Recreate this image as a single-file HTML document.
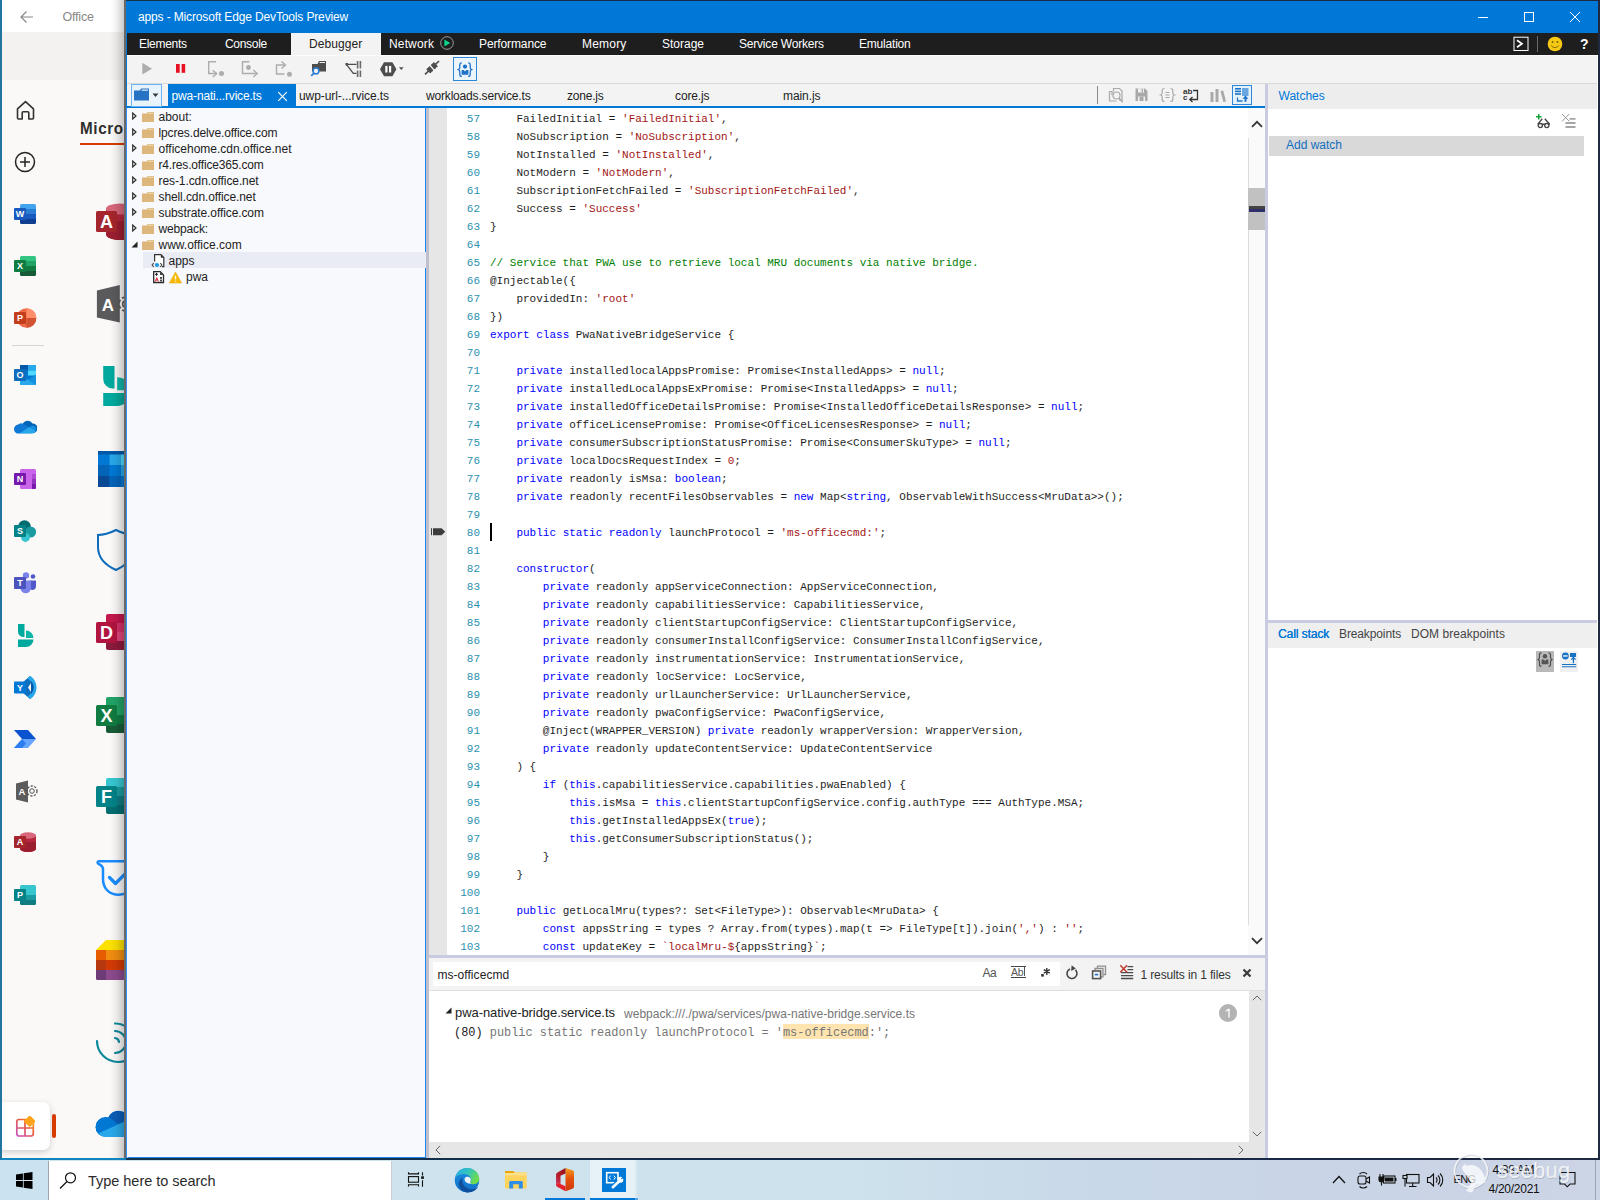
<!DOCTYPE html>
<html>
<head>
<meta charset="utf-8">
<title>apps - Microsoft Edge DevTools Preview</title>
<style>
*{box-sizing:border-box;margin:0;padding:0}
html,body{width:1600px;height:1200px;overflow:hidden;background:linear-gradient(90deg,#12354a,#13294a 50%,#1f2942 100%);font-family:"Liberation Sans",sans-serif;font-size:12px;color:#222}
.abs{position:absolute}
#office{position:absolute;left:0;top:0;width:126px;height:1160px;background:#faf9f8;border-left:2px solid #2474a0;border-bottom:2px solid #1184c0;overflow:hidden}
#office .top{position:absolute;left:0;top:0;width:130px;height:32px;background:#fff}
#office .band{position:absolute;left:0;top:32px;width:130px;height:48px;background:#f3f2f1}
#dt{position:absolute;left:126px;top:1px;width:1472px;height:1157px;background:#f3f3f3;border-left:1px solid #0078d7;overflow:hidden}
#dt .title{position:absolute;left:0;top:0;width:1472px;height:32px;background:#0078d7;color:#fff}
#dt .title .t{position:absolute;left:11px;top:9px;font-size:12px;letter-spacing:-.14px;white-space:nowrap}
#tabs{position:absolute;left:0;top:32px;width:1472px;height:22px;background:#1e1e1e;color:#fff}
#tabs span{position:absolute;top:4px;font-size:12px;letter-spacing:-.3px;white-space:nowrap}
#tabs .act{position:absolute;left:164px;top:0;width:90px;height:22px;background:#f3f3f3}
#toolbar{position:absolute;left:0;top:54px;width:1472px;height:29px;background:#f3f3f3;border-bottom:1px solid #dadada;border-top:1px solid #fcfcfc}
#ftabs{position:absolute;left:0;top:83px;width:1138px;height:24px;background:#f3f3f3;border-bottom:2px solid #0078d7}
#ftabs span{position:absolute;top:5px;font-size:12px;white-space:nowrap;color:#222}
#tree{position:absolute;left:0;top:107px;width:299px;height:1050px;background:#f8f9fc;border:1px solid #1e88f0;border-top:none;border-left:1px solid #f8f9fc}
#tree .row{position:absolute;left:0;height:16px;width:298px;white-space:nowrap;font-size:12px}
#tree .row span{position:absolute;top:2px}
#editor{position:absolute;left:302px;top:107px;width:836px;height:847px;background:#fff;overflow:hidden}
#gutter{position:absolute;left:0;top:0;width:18px;height:847px;background:#e6e6e6}
.ln,.cl{position:absolute;font-family:"Liberation Mono",monospace;font-size:11.5px;line-height:18px;height:18px;white-space:pre;transform:scaleX(.95652)}
.ln{left:17px;width:34px;text-align:right;color:#2b91af;transform-origin:100% 0}
.cl{left:61px;color:#1e1e1e;transform-origin:0 0}
.k{color:#0000ff}.s{color:#a31515}.c{color:#008000}
#vs{position:absolute;left:819px;top:0;width:17px;height:847px;background:#fafafa}
#search{position:absolute;left:303px;top:957px;width:835px;height:33px;background:#f3f3f3}
#results{position:absolute;left:303px;top:990px;width:835px;height:167px;background:#fff}
#right{position:absolute;left:1141px;top:83px;width:330px;height:1074px;background:#fff}
.split{background:#c9cbe0}
#taskbar{position:absolute;left:0;top:1160px;width:1600px;height:40px;background:linear-gradient(90deg,#cfe4ee 0,#cde2ec 850px,#c9d9e9 1060px,#c9d4e6 1340px,#ccd4e5 1600px);overflow:hidden}
</style>
</head>
<body>
<div id="office">
  <div class="top"></div><div class="band"></div>
  <svg class="abs" style="left:17px;top:9px" width="16" height="16" viewBox="0 0 16 16"><path d="M14 8H2.500M7.500 2.500L2 8l5.500 5.500" fill="none" stroke="#8a8886" stroke-width="1.200"/></svg>
<span class="abs" style="left:60.500px;top:10px;font-size:12.500px;letter-spacing:-.2px;color:#8a8886">Office</span>
<svg class="abs" style="left:13px;top:99px" width="22" height="23" viewBox="0 0 22 23"><path d="M2.500 9.800L10.500 2.700l8 7.100v9.200a1 1 0 0 1-1 1h-3.700v-6.200a1 1 0 0 0-1-1h-4.600a1 1 0 0 0-1 1v6.200H3.500a1 1 0 0 1-1-1z" fill="none" stroke="#323130" stroke-width="1.600" stroke-linejoin="round"/></svg>
<span class="abs" style="left:77.800px;top:119.900px;font-size:15.6px;font-weight:bold;color:#2f2e2d;white-space:nowrap;letter-spacing:.66px;transform:scaleX(.976);transform-origin:0 0">Microsoft</span>
<div class="abs" style="left:78px;top:143px;width:60px;height:2px;background:#d83b01"></div>
<svg class="abs" style="left:12px;top:151px" width="22" height="22" viewBox="0 0 22 22"><circle cx="11" cy="11" r="9.500" fill="none" stroke="#252423" stroke-width="1.500"/><path d="M11 6v10M6 11h10" stroke="#252423" stroke-width="1.500"/></svg>
<svg class="abs" style="left:12px;top:204px" width="23" height="22" viewBox="0 0 23 22"><clipPath id="c12204"><rect x="6" y="0" width="16" height="20" rx="1.5"/></clipPath><g clip-path="url(#c12204)"><rect x="6" y="0" width="16" height="5" fill="#41a5ee"/><rect x="6" y="5" width="16" height="5" fill="#2b7cd3"/><rect x="6" y="10" width="16" height="5" fill="#185abd"/><rect x="6" y="15" width="16" height="5" fill="#103f91"/></g><rect x="0" y="4" width="12" height="12" rx="1" fill="#185abd"/><text x="6" y="13.300" text-anchor="middle" font-family="Liberation Sans" font-weight="bold" font-size="9" fill="#fff">W</text></svg>
<svg class="abs" style="left:12px;top:256px" width="23" height="22" viewBox="0 0 23 22"><clipPath id="c12256"><rect x="6" y="0" width="16" height="20" rx="1.5"/></clipPath><g clip-path="url(#c12256)"><rect x="6" y="0" width="16" height="5" fill="#33c481"/><rect x="6" y="5" width="16" height="5" fill="#21a366"/><rect x="6" y="10" width="16" height="5" fill="#107c41"/><rect x="6" y="15" width="16" height="5" fill="#185c37"/></g><rect x="0" y="4" width="12" height="12" rx="1" fill="#107c41"/><text x="6" y="13.300" text-anchor="middle" font-family="Liberation Sans" font-weight="bold" font-size="9" fill="#fff">X</text></svg>
<svg class="abs" style="left:12px;top:308px" width="23" height="22" viewBox="0 0 23 22"><circle cx="12.500" cy="10" r="9.800" fill="#ed6c47"/><path d="M12.500 .2a9.800 9.800 0 0 1 9.800 9.800h-9.800z" fill="#ff8f6b"/><path d="M22.300 10a9.800 9.800 0 0 1-9.800 9.800V10z" fill="#d35230"/><rect x="0" y="4" width="12" height="12" rx="1" fill="#c43e1c"/><text x="6" y="13.300" text-anchor="middle" font-family="Liberation Sans" font-weight="bold" font-size="9" fill="#fff">P</text></svg>
<div class="abs" style="left:10px;top:345px;width:32px;height:1px;background:#d6d4d2"></div>
<svg class="abs" style="left:12px;top:365px" width="23" height="22" viewBox="0 0 23 22"><rect x="6" y="0" width="16" height="20" rx="1.500" fill="#0078d4"/><rect x="6" y="0" width="8" height="5.500" fill="#0358a7"/><rect x="14" y="0" width="8" height="5.500" fill="#28a8ea"/><rect x="14" y="5.500" width="8" height="5" fill="#50d9ff"/><path d="M6 20l16-10.500V18.500a1.500 1.500 0 0 1-1.500 1.500z" fill="#1490df"/><path d="M6 10l16 10H7.500A1.500 1.500 0 0 1 6 18.500z" fill="#28a8ea"/><rect x="0" y="4" width="12" height="12" rx="1" fill="#0f6cbd"/><text x="6" y="13.300" text-anchor="middle" font-family="Liberation Sans" font-weight="bold" font-size="9" fill="#fff">O</text></svg>
<svg class="abs" style="left:12px;top:419px" width="23" height="16" viewBox="0 0 23 15"><path d="M8.500 5.200a5.500 5.500 0 0 1 10-1.200 4.500 4.500 0 0 1 .5 9.500H5a4.200 4.200 0 0 1-.8-8.300z" fill="#0364b8"/><path d="M3.800 5.300a4.700 4.700 0 0 1 5.700-.9l5.500 3.300-9.500 6.300H5A4.200 4.200 0 0 1 3.800 5.300z" fill="#0f78d4"/><path d="M15 7.700l3.800-1.600a4 4 0 0 1 .5 7.700H5.500z" fill="#1490df"/><path d="M5.500 14l9.500-6.300 6.300 3.800A4 4 0 0 1 18 14z" fill="#28a8ea"/></svg>
<svg class="abs" style="left:12px;top:469px" width="23" height="22" viewBox="0 0 23 22"><clipPath id="c12469"><rect x="6" y="0" width="16" height="20" rx="1.5"/></clipPath><g clip-path="url(#c12469)"><rect x="6" y="0" width="16" height="5" fill="#ca64ea"/><rect x="6" y="5" width="16" height="5" fill="#ca64ea"/><rect x="6" y="10" width="16" height="5" fill="#ca64ea"/><rect x="6" y="15" width="16" height="5" fill="#ca64ea"/><rect x="18" y="5" width="4" height="5" fill="#ae4bd5"/><rect x="18" y="10" width="4" height="5" fill="#9332bf"/><rect x="18" y="15" width="4" height="5" fill="#7719aa"/></g><rect x="0" y="4" width="12" height="12" rx="1" fill="#7719aa"/><text x="6" y="13.300" text-anchor="middle" font-family="Liberation Sans" font-weight="bold" font-size="9" fill="#fff">N</text></svg>
<svg class="abs" style="left:12px;top:520px" width="23" height="23" viewBox="0 0 23 23"><circle cx="10.500" cy="6.500" r="6.300" fill="#036c70"/><circle cx="16.500" cy="12" r="5.600" fill="#1a9ba1"/><circle cx="11.500" cy="17.500" r="4.400" fill="#37c6d0"/><rect x="0" y="5" width="12" height="12" rx="1" fill="#038387"/><text x="6" y="14.300" text-anchor="middle" font-family="Liberation Sans" font-weight="bold" font-size="9" fill="#fff">S</text></svg>
<svg class="abs" style="left:12px;top:572px" width="23" height="23" viewBox="0 0 23 23"><circle cx="19" cy="4.500" r="2.300" fill="#5059c9"/><path d="M15.500 8.500h6.500v6a3.500 3.500 0 0 1-6.500 1.800z" fill="#5059c9"/><circle cx="12" cy="3.500" r="3.200" fill="#7b83eb"/><path d="M6.500 8.500h10.500v7.500a5.200 5.200 0 0 1-10.500 0z" fill="#7b83eb"/><rect x="0" y="5" width="12" height="12" rx="1" fill="#4b53bc"/><text x="6" y="14.300" text-anchor="middle" font-family="Liberation Sans" font-weight="bold" font-size="9" fill="#fff">T</text></svg>
<svg class="abs" style="left:16px;top:624px" width="17" height="23" viewBox="0 0 17 23"><path d="M0 0h6.5v13H5.5A5.5 5.5 0 0 1 0 7.5z" fill="#00a99d"/><path d="M8 6.500a7.500 7.500 0 0 1 7.500 7.500H8z" fill="#0fb5a8"/><path d="M0 15.500h15.500a7.500 7.500 0 0 1-7.500 7.500H0z" fill="#00a99d"/></svg>
<svg class="abs" style="left:12px;top:676px" width="23" height="23" viewBox="0 0 23 23"><path d="M8 7l8-7 3 4-5 7.500 5 7.500-3 4-8-7z" fill="#106ebe"/><path d="M13 2.500l3.500-2.500a14 14 0 0 1 0 23l-3.500-2.500a10 10 0 0 0 0-18z" fill="#28a8ea"/><path d="M17 5a9 9 0 0 1 0 13z" fill="#0358a7"/><rect x="0" y="5.500" width="12" height="12" rx="1" fill="#0078d4"/><text x="6" y="14.800" text-anchor="middle" font-family="Liberation Sans" font-weight="bold" font-size="9" fill="#fff">Y</text></svg>
<svg class="abs" style="left:12px;top:729px" width="23" height="20" viewBox="0 0 23 20"><path d="M0 1h14l8 9h-14z" fill="#0b53ce"/><path d="M8 10h14l-8 9H0z" fill="#66a6ff"/><path d="M0 19l8-9 4 4.500-4 4.500z" fill="#2d7df0"/></svg>
<svg class="abs" style="left:13px;top:780px" width="24" height="23" viewBox="0 0 24 23"><circle cx="17" cy="11" r="5" fill="none" stroke="#555" stroke-width="1.300" stroke-dasharray="2.200 1.400"/><circle cx="17" cy="11" r="2.300" fill="none" stroke="#555" stroke-width="1"/><path d="M1 3.500L13 .5v22L1 19.500z" fill="#5c5c5c"/><text x="7" y="15" text-anchor="middle" font-family="Liberation Sans" font-weight="bold" font-size="9.500" fill="#fff">A</text></svg>
<svg class="abs" style="left:12px;top:832px" width="23" height="22" viewBox="0 0 23 22"><path d="M6 3.500v13c0 2 3.600 3.500 8 3.500s8-1.500 8-3.500v-13z" fill="#b5273b"/><path d="M6 10v6.500c0 2 3.600 3.500 8 3.500s8-1.500 8-3.500V10z" fill="#9b1d30"/><ellipse cx="14" cy="3.500" rx="8" ry="3.200" fill="#d8677b"/><rect x="0" y="4" width="12" height="12" rx="1" fill="#a4262c"/><text x="6" y="13.300" text-anchor="middle" font-family="Liberation Sans" font-weight="bold" font-size="9" fill="#fff">A</text></svg>
<svg class="abs" style="left:12px;top:885px" width="23" height="22" viewBox="0 0 23 22"><clipPath id="c12885"><rect x="6" y="0" width="16" height="20" rx="1.5"/></clipPath><g clip-path="url(#c12885)"><rect x="6" y="0" width="16" height="5" fill="#37c6d0"/><rect x="6" y="5" width="16" height="5" fill="#37c6d0"/><rect x="6" y="10" width="16" height="5" fill="#1a9ba1"/><rect x="6" y="15" width="16" height="5" fill="#0f7c82"/></g><rect x="0" y="4" width="12" height="12" rx="1" fill="#038387"/><text x="6" y="13.300" text-anchor="middle" font-family="Liberation Sans" font-weight="bold" font-size="9" fill="#fff">P</text></svg>
<svg class="abs" style="left:94px;top:203px" width="40" height="40" viewBox="0 0 40 40"><path d="M10 6v25c0 3.500 6 6 14 6s14-2.500 14-6V6z" fill="#b5273b"/><path d="M10 18v13c0 3.500 6 6 14 6s14-2.500 14-6V18z" fill="#9b1d30"/><ellipse cx="24" cy="6" rx="14" ry="5.500" fill="#d8677b"/><rect x="0" y="8" width="21" height="21" rx="1.500" fill="#a4262c"/><text x="10.500" y="25" text-anchor="middle" font-family="Liberation Sans" font-weight="bold" font-size="18" fill="#fff">A</text></svg>
<svg class="abs" style="left:94px;top:284px" width="40" height="40" viewBox="0 0 40 40"><circle cx="30" cy="20" r="7" fill="none" stroke="#555" stroke-width="1.800" stroke-dasharray="3.500 2.200"/><circle cx="30" cy="20" r="3.300" fill="none" stroke="#555" stroke-width="1.500"/><path d="M.9 6.500L23.800 1v37.500L.9 33.500z" fill="#5a5a5c"/><text x="12" y="26.500" text-anchor="middle" font-family="Liberation Sans" font-weight="bold" font-size="17" fill="#fff">A</text></svg>
<svg class="abs" style="left:101px;top:366px" width="30" height="40" viewBox="0 0 17 23"><path d="M0 0h6.5v13H5.5A5.5 5.5 0 0 1 0 7.5z" fill="#00a99d"/><path d="M8 6.500a7.500 7.500 0 0 1 7.500 7.500H8z" fill="#0fb5a8"/><path d="M0 15.500h15.500a7.500 7.500 0 0 1-7.500 7.500H0z" fill="#00a99d"/></svg>
<svg class="abs" style="left:96px;top:451px" width="40" height="36" viewBox="0 0 40 36"><rect width="40" height="36" rx="2" fill="#0364b8"/><rect x="0.0" y="3" width="11.500" height="11" fill="#0078d4"/><rect x="11.5" y="3" width="11.500" height="11" fill="#28a8ea"/><rect x="23.0" y="3" width="11.500" height="11" fill="#50d9ff"/><rect x="0.0" y="14" width="11.500" height="11" fill="#0364b8"/><rect x="11.5" y="14" width="11.500" height="11" fill="#0078d4"/><rect x="23.0" y="14" width="11.500" height="11" fill="#28a8ea"/><rect x="0.0" y="25" width="11.500" height="11" fill="#0a4a94"/><rect x="11.5" y="25" width="11.500" height="11" fill="#0364b8"/><rect x="23.0" y="25" width="11.500" height="11" fill="#0078d4"/><rect width="40" height="3.500" fill="#0358a7"/></svg>
<svg class="abs" style="left:94px;top:529px" width="44" height="44" viewBox="0 0 44 44"><path d="M2 6c7 0 12-2 18-5 6 3 11 5 18 5v12c0 11-7 18-18 23C9 36 2 29 2 18z" fill="none" stroke="#0f6cbd" stroke-width="2"/></svg>
<svg class="abs" style="left:94px;top:614px" width="40" height="40" viewBox="0 0 40 40"><clipPath id="d94614"><rect x="10" y="0" width="28" height="36" rx="2"/></clipPath><g clip-path="url(#d94614)"><rect x="10" y="0" width="28" height="9" fill="#c2174b"/><rect x="10" y="9" width="28" height="9" fill="#d4316a"/><rect x="10" y="18" width="28" height="9" fill="#e0467c"/><rect x="10" y="27" width="28" height="9" fill="#8c1a3c"/></g><rect x="0" y="8" width="21" height="21" rx="1.500" fill="#b0143f"/><text x="10.500" y="25" text-anchor="middle" font-family="Liberation Sans" font-weight="bold" font-size="18" fill="#fff">D</text></svg>
<svg class="abs" style="left:94px;top:697px" width="40" height="40" viewBox="0 0 40 40"><clipPath id="d94697"><rect x="10" y="0" width="28" height="36" rx="2"/></clipPath><g clip-path="url(#d94697)"><rect x="10" y="0" width="28" height="9" fill="#21a366"/><rect x="10" y="9" width="28" height="9" fill="#21a366"/><rect x="10" y="18" width="28" height="9" fill="#107c41"/><rect x="10" y="27" width="28" height="9" fill="#185c37"/></g><rect x="0" y="8" width="21" height="21" rx="1.500" fill="#107c41"/><text x="10.500" y="25" text-anchor="middle" font-family="Liberation Sans" font-weight="bold" font-size="18" fill="#fff">X</text></svg>
<svg class="abs" style="left:94px;top:778px" width="40" height="40" viewBox="0 0 40 40"><clipPath id="d94778"><rect x="10" y="0" width="28" height="36" rx="2"/></clipPath><g clip-path="url(#d94778)"><rect x="10" y="0" width="28" height="9" fill="#37c6d0"/><rect x="10" y="9" width="28" height="9" fill="#1a9ba1"/><rect x="10" y="18" width="28" height="9" fill="#0f7c82"/><rect x="10" y="27" width="28" height="9" fill="#036c70"/></g><rect x="0" y="8" width="21" height="21" rx="1.500" fill="#038387"/><text x="10.500" y="25" text-anchor="middle" font-family="Liberation Sans" font-weight="bold" font-size="18" fill="#fff">F</text></svg>
<svg class="abs" style="left:93px;top:858px" width="44" height="40" viewBox="0 0 44 40"><path d="M4 3.200h29c6 0 6 4 6 8v10c0 10-7 15.500-15.500 15.500S8 31 8 21V11c0-3-2-4-4.500-5.200C2 5 2.500 3.200 4 3.200z" fill="none" stroke="#1a8cff" stroke-width="2.500" stroke-linejoin="round"/><path d="M14.500 19.500l6 6 14-14" fill="none" stroke="#1a8cff" stroke-width="3.200" stroke-linecap="round" stroke-linejoin="round"/></svg>
<svg class="abs" style="left:94px;top:939px" width="40" height="42" viewBox="0 0 40 42"><path d="M10 1h30v10H0z" fill="#fbe000"/><rect x="0" y="11" width="10" height="10" fill="#e65c00"/><rect x="10" y="11" width="30" height="10" fill="#f08c10"/><rect x="0" y="21" width="10" height="10" fill="#b5380f"/><rect x="10" y="21" width="30" height="10" fill="#d13a05"/><path d="M0 31h10v10H1.500A1.500 1.500 0 0 1 0 39.500z" fill="#6d3b78"/><rect x="10" y="31" width="30" height="10" fill="#8a4a8c"/></svg>
<svg class="abs" style="left:92px;top:1018px" width="44" height="46" viewBox="0 0 44 46" fill="none" stroke="#0c8a9c" stroke-width="2.200" stroke-linecap="round"><path d="M3 23a21 21 0 0 0 42 0"/><path d="M21 5.500a17.500 17.500 0 0 1 12 4"/><path d="M21 13a11 11 0 0 1 0 22"/><path d="M21 20a4.500 4.500 0 0 1 4 4"/></svg>
<svg class="abs" style="left:91px;top:1108px" width="40" height="32" viewBox="0 0 40 32"><clipPath id="bigcloud"><circle cx="12.500" cy="19" r="9.900"/><circle cx="25.500" cy="13.500" r="10.800"/><rect x="12.500" y="17" width="30" height="11.900"/></clipPath><g clip-path="url(#bigcloud)"><rect width="40" height="32" fill="#0078d4"/><circle cx="25.500" cy="13.500" r="10.800" fill="#0a5db8"/><path d="M0 14l15-5.500 12 9-27 13z" fill="#0078d4"/><path d="M0 28L40 9.500v23H0z" fill="#28a8ea"/></g></svg>
<div class="abs" style="left:-4px;top:1102px;width:52px;height:48px;background:#fff;border-radius:7px;box-shadow:0 2px 6px rgba(0,0,0,.18)"></div>
<svg class="abs" style="left:13px;top:1116px" width="22" height="22" viewBox="0 0 22 22"><defs><linearGradient id="ga" x1="0" y1="1" x2="1" y2="0"><stop offset="0" stop-color="#c850c0"/><stop offset=".6" stop-color="#e8593a"/><stop offset="1" stop-color="#ffb900"/></linearGradient></defs><rect x="1.800" y="3.500" width="16.500" height="16.500" rx="2.200" fill="none" stroke="url(#ga)" stroke-width="1.700"/><path d="M10 3.500V20M1.800 12h16.500" stroke="url(#ga)" stroke-width="1.700"/><rect x="10.500" y="1" width="8.500" height="8.500" rx="1.500" transform="rotate(45 14.750 5.250)" fill="#ffa41a"/></svg>
<div class="abs" style="left:50px;top:1114px;width:4px;height:24px;border-radius:2px;background:#d83b01"></div>
<div class="abs" style="left:108px;top:0;width:15px;height:1160px;background:linear-gradient(90deg,rgba(0,0,0,0),rgba(0,0,0,.05) 40%,rgba(0,0,0,.22))"></div>
<div class="abs" style="left:122px;top:0;width:2px;height:1160px;background:#686868"></div>
</div>
<div id="dt">
  <div class="title"><span class="t">apps - Microsoft Edge DevTools Preview</span><svg class="abs" style="left:1343px;top:0" width="120" height="32" viewBox="0 0 120 32" fill="none" stroke="#fff" stroke-width="1">
<path d="M8 16.5h10"/><rect x="54.5" y="11.5" width="9" height="9"/><path d="M100 11l10 10M110 11l-10 10"/></svg></div>
  <div id="tabs"><div class="act"></div>
    <span style="left:12px;letter-spacing:-0.3px">Elements</span>
    <span style="left:98px;letter-spacing:-0.3px">Console</span>
    <span style="left:182px;color:#222;letter-spacing:0.08px">Debugger</span>
    <span style="left:262px;letter-spacing:0.15px">Network</span>
    <span style="left:352px;letter-spacing:-0.12px">Performance</span>
    <span style="left:455px;letter-spacing:0.2px">Memory</span>
    <span style="left:535px;letter-spacing:0px">Storage</span>
    <span style="left:612px;letter-spacing:-0.2px">Service Workers</span>
    <span style="left:732px;letter-spacing:-0.2px">Emulation</span>
    <svg class="abs" style="left:313px;top:3px" width="14" height="14" viewBox="0 0 14 14"><circle cx="7" cy="7" r="6.3" fill="none" stroke="#bdbdbd" stroke-width=".8"/><path d="M4.4 3.5v7L10.2 7z" fill="#0dd58b"/></svg>
<svg class="abs" style="left:1386px;top:3px" width="16" height="16" viewBox="0 0 16 16"><rect x="1" y="1.2" width="14" height="13.3" fill="#1e1e1e" stroke="#fff" stroke-width="1"/><path d="M4 4.2l5 3.5-5 3.5" fill="none" stroke="#fff" stroke-width="1.7"/></svg>
<div class="abs" style="left:1410px;top:3px;width:1px;height:16px;background:#6a6a6a"></div>
<svg class="abs" style="left:1420px;top:3px" width="16" height="16" viewBox="0 0 16 16"><circle cx="8" cy="8" r="7.3" fill="#f6c915"/><circle cx="5.6" cy="6" r="1" fill="#7a6500"/><circle cx="10.4" cy="6" r="1" fill="#7a6500"/><path d="M4.2 9.3c1.6 3 6 3 7.600 0" fill="none" stroke="#8a7200" stroke-width="1"/></svg>
<span style="left:1453px;top:3px;font-weight:bold;font-size:14px;color:#fff">?</span>
  </div>
  <div id="toolbar"><svg class="abs" style="left:13px;top:4px" width="160" height="20" viewBox="0 0 160 20">
<path d="M2.300 2.800v11.800L12 8.700z" fill="#adadad"/>
<rect x="36" y="4" width="3.700" height="8.800" fill="#e81123"/><rect x="41.600" y="4" width="3.600" height="8.800" fill="#e81123"/>
<g fill="none" stroke="#adadad" stroke-width="1.400"><path d="M76 1.700h-7.300v11.800h7.800"/><path d="M72.700 10.200l4 3.400-4 3.400"/></g><circle cx="81.500" cy="13.600" r="2.500" fill="#adadad"/>
<g fill="none" stroke="#adadad" stroke-width="1.400"><path d="M109.500 1.700h-7v11.800h14.200"/><path d="M113.300 10l4 3.500-4 3.500"/></g><circle cx="108.500" cy="7.500" r="2.400" fill="#adadad"/>
<g fill="none" stroke="#adadad" stroke-width="1.400"><path d="M144.500 14h-8V5h8.500"/><path d="M141.500 1.500l4 3.500-4 3.500"/></g><circle cx="149.500" cy="14.300" r="2.500" fill="#adadad"/>
</svg>
<svg class="abs" style="left:183px;top:4px" width="18" height="18" viewBox="0 0 18 18"><path d="M2 4h5.500l1.500-3h7v10.500H2z" fill="#4d4d4d"/><path d="M9.800 2h5.200v1h-5.700z" fill="#f0f0f0"/><circle cx="6" cy="11" r="2.900" fill="#f3f3f3" stroke="#2b7cd3" stroke-width="1.500"/><path d="M3.900 13.100l-2.700 2.700" stroke="#2b7cd3" stroke-width="1.700"/></svg>
<svg class="abs" style="left:217px;top:4px" width="20" height="18" viewBox="0 0 20 18" fill="none"><path d="M2.500 4.300h10M2.800 4.800l6.500 8.500h3.200" stroke="#4d4d4d" stroke-width="1.300"/><rect x="1.500" y="3" width="2.500" height="2.500" fill="#4d4d4d"/><path d="M13.600 1v7.500M16.400 1v7.500M13.600 10.500v6.500M16.400 10.500v6.500" stroke="#6a6a6a" stroke-width="1.600"/></svg>
<svg class="abs" style="left:252px;top:5px" width="26" height="18" viewBox="0 0 26 18"><path d="M5 1.200h8.400l4 7-4 7H5L1 8.200z" fill="#4d4d4d"/><rect x="6.300" y="4.900" width="2.200" height="6.600" fill="#fff"/><rect x="10" y="4.900" width="2.200" height="6.600" fill="#fff"/><path d="M20 6.300h4.600l-2.300 2.700z" fill="#4d4d4d"/></svg>
<svg class="abs" style="left:296px;top:3px" width="18" height="18" viewBox="0 0 18 18"><path d="M2 15.300L16 2" stroke="#4d4d4d" stroke-width="1.700"/><path d="M5.300 12.200L12.700 5.200" stroke="#4d4d4d" stroke-width="5.600"/><path d="M4 9.800l3.800 4M6 8l3.700 4M10.500 3.700l3.800 4M8.600 5.500l3.800 4" stroke="#4d4d4d" stroke-width="1.300"/><path d="M5.800 4.800l6.400 7.800" stroke="#f3f3f3" stroke-width="1.400"/></svg>
<div class="abs" style="left:326px;top:1px;width:24px;height:24px;background:#ecf4fc;border:1px solid #2b88d8"></div>
<svg class="abs" style="left:330px;top:5.700000000000003px" width="16" height="16" viewBox="0 0 16 16"><g fill="none" stroke="#1e74c8" stroke-width="1.300"><path d="M4.800 .8c-1.700 0-2 .7-2 1.900v2.600c0 1.200-.4 1.900-1.400 2.300 1 .4 1.400 1.100 1.400 2.300v2.600c0 1.200.3 1.900 2 1.900"/><path d="M11.200 .8c1.700 0 2 .7 2 1.900v2.600c0 1.200.4 1.900 1.400 2.300-1 .4-1.400 1.100-1.400 2.300v2.600c0 1.200-.3 1.900-2 1.900"/></g><circle cx="8" cy="4.600" r="2.100" fill="#1e74c8"/><path d="M4.600 8h2.200l1.200 1.500 1.200-1.500h2.200v4.700h-6.800z" fill="#1e74c8"/></svg></div>
  <div id="ftabs">
    <div class="abs" style="left:4px;top:0;width:31px;height:23px;background:#e9f3fc;border:1px solid #6ab4f5"></div>
<svg class="abs" style="left:6px;top:3px" width="28" height="16" viewBox="0 0 28 16"><path d="M1 3.500h5.500l2-2h7.500v12H1z" fill="#2672c4"/><path d="M9.300 2.500h5.700v1.200H8.200z" fill="#e8f1fb"/><path d="M19.500 6.500h6l-3 3.500z" fill="#3b3b3b"/></svg>
<div class="abs" style="left:41px;top:0;width:128px;height:23px;background:#0078d7"></div>
<span style="left:44.6px;top:5px;color:#fff;font-size:12px;letter-spacing:-0.178px">pwa-nati...rvice.ts</span>
<svg class="abs" style="left:150px;top:7px" width="11" height="11" viewBox="0 0 11 11"><path d="M1.200 1.200l8.600 8.600M9.800 1.200l-8.600 8.600" stroke="#fff" stroke-width="1.200" fill="none"/></svg>
<span style="left:172.0px;top:5px;color:#222;font-size:12px;letter-spacing:-0.072px">uwp-url-...rvice.ts</span>
<span style="left:299.0px;top:5px;color:#222;font-size:12px;letter-spacing:-0.177px">workloads.service.ts</span>
<span style="left:440.0px;top:5px;color:#222;font-size:12px;letter-spacing:-0.219px">zone.js</span>
<span style="left:548.0px;top:5px;color:#222;font-size:12px;letter-spacing:-0.120px">core.js</span>
<span style="left:656.0px;top:5px;color:#222;font-size:12px;letter-spacing:-0.074px">main.js</span>
<div class="abs" style="left:970px;top:2px;width:1px;height:18px;background:#8a8a8a"></div>
<svg class="abs" style="left:980px;top:2px" width="148" height="20" viewBox="0 0 148 20">
<g fill="none" stroke="#a9a9a9" stroke-width="1.200"><path d="M6.500 5.500V2.500h6l2.500 2.500v9h-3"/><path d="M5 9V5.500H2.500v9.500h7"/><circle cx="9.500" cy="9.500" r="3.500"/><path d="M12 12.300l3.800 3.800" stroke-width="1.500"/></g>
<path d="M28.500 2.500h9.500l2.500 2.500v10h-12z" fill="#a9a9a9"/><rect x="31" y="2.500" width="6" height="4" fill="#f3f3f3"/><rect x="34.500" y="3" width="1.500" height="3" fill="#a9a9a9"/><rect x="31" y="10.500" width="7" height="4.500" fill="#f3f3f3"/><rect x="32.500" y="10.500" width="4" height="4.500" fill="#a9a9a9"/>
<g fill="none" stroke="#a9a9a9" stroke-width="1.200"><path d="M57.500 2.500c-2 0-2.300.8-2.300 2v2.300c0 1.200-.5 1.900-1.600 2.200 1.100.3 1.600 1 1.600 2.200v2.300c0 1.200.3 2 2.300 2"/><path d="M63.500 2.500c2 0 2.300.8 2.300 2v2.300c0 1.200.5 1.900 1.600 2.200-1.100.3-1.600 1-1.600 2.200v2.300c0 1.200-.3 2-2.300 2"/><path d="M58.500 6.500h4M58.500 9h4M58.500 11.500h4"/></g>
<g fill="none" stroke="#333" stroke-width="1.300"><path d="M86 4.500h4.500v9h-7.500"/><path d="M85.500 11l-2.700 2.500 2.700 2.500"/></g>
<text x="76" y="7.500" font-family="Liberation Sans" font-size="8" font-weight="bold" fill="#333">ab</text><text x="76" y="14" font-family="Liberation Sans" font-size="8" font-weight="bold" fill="#333">c</text>
<g fill="#a9a9a9"><rect x="103.500" y="6" width="3" height="10"/><rect x="108.500" y="3" width="3" height="13"/><path d="M113.500 5l2.700-.6 2.800 11-2.700.6z"/></g>
</svg>
<div class="abs" style="left:1105px;top:1px;width:20px;height:20px;background:#e5f1fb;border:1px solid #2b88d8"></div>
<svg class="abs" style="left:1107px;top:3px" width="16" height="16" viewBox="0 0 16 16"><g fill="#1e74c8"><rect x="1" y="1" width="6" height="1.600"/><rect x="1" y="3.600" width="6" height="1.600"/><rect x="1" y="6.200" width="6" height="1.600"/><rect x="8" y="1" width="6.500" height="8" fill="#6aa7e0"/><path d="M11.500 8.500l3 3.200h-2v3h-2v-3h-2z"/></g><path d="M3.500 10.500v3.500h5" fill="none" stroke="#1e74c8" stroke-width="1.300"/></svg>
  </div>
  <div id="tree"><svg class="abs" style="left:4px;top:4px" width="5" height="8" viewBox="0 0 5 8"><path d="M.7 1v6L4 4z" fill="none" stroke="#2a2a2a" stroke-width="1.150"/></svg><svg class="abs" style="left:14px;top:3px" width="12" height="11" viewBox="0 0 12 11"><path d="M0 2.600h4.600l1.200-1.600H12V11H0z" fill="#dcb67a"/><path d="M6.300 1.700h5.200v.9H5.700z" fill="#f6ead2"/></svg><div class="row" style="top:0px"><span style="left:30.5px;letter-spacing:0px">about:</span></div>
<svg class="abs" style="left:4px;top:20px" width="5" height="8" viewBox="0 0 5 8"><path d="M.7 1v6L4 4z" fill="none" stroke="#2a2a2a" stroke-width="1.150"/></svg><svg class="abs" style="left:14px;top:19px" width="12" height="11" viewBox="0 0 12 11"><path d="M0 2.600h4.600l1.200-1.600H12V11H0z" fill="#dcb67a"/><path d="M6.300 1.700h5.200v.9H5.700z" fill="#f6ead2"/></svg><div class="row" style="top:16px"><span style="left:30.5px;letter-spacing:-0.13px">lpcres.delve.office.com</span></div>
<svg class="abs" style="left:4px;top:36px" width="5" height="8" viewBox="0 0 5 8"><path d="M.7 1v6L4 4z" fill="none" stroke="#2a2a2a" stroke-width="1.150"/></svg><svg class="abs" style="left:14px;top:35px" width="12" height="11" viewBox="0 0 12 11"><path d="M0 2.600h4.600l1.200-1.600H12V11H0z" fill="#dcb67a"/><path d="M6.300 1.700h5.200v.9H5.700z" fill="#f6ead2"/></svg><div class="row" style="top:32px"><span style="left:30.5px;letter-spacing:0px">officehome.cdn.office.net</span></div>
<svg class="abs" style="left:4px;top:52px" width="5" height="8" viewBox="0 0 5 8"><path d="M.7 1v6L4 4z" fill="none" stroke="#2a2a2a" stroke-width="1.150"/></svg><svg class="abs" style="left:14px;top:51px" width="12" height="11" viewBox="0 0 12 11"><path d="M0 2.600h4.600l1.200-1.600H12V11H0z" fill="#dcb67a"/><path d="M6.300 1.700h5.200v.9H5.700z" fill="#f6ead2"/></svg><div class="row" style="top:48px"><span style="left:30.5px;letter-spacing:-0.17px">r4.res.office365.com</span></div>
<svg class="abs" style="left:4px;top:68px" width="5" height="8" viewBox="0 0 5 8"><path d="M.7 1v6L4 4z" fill="none" stroke="#2a2a2a" stroke-width="1.150"/></svg><svg class="abs" style="left:14px;top:67px" width="12" height="11" viewBox="0 0 12 11"><path d="M0 2.600h4.600l1.200-1.600H12V11H0z" fill="#dcb67a"/><path d="M6.300 1.700h5.200v.9H5.700z" fill="#f6ead2"/></svg><div class="row" style="top:64px"><span style="left:30.5px;letter-spacing:-0.09px">res-1.cdn.office.net</span></div>
<svg class="abs" style="left:4px;top:84px" width="5" height="8" viewBox="0 0 5 8"><path d="M.7 1v6L4 4z" fill="none" stroke="#2a2a2a" stroke-width="1.150"/></svg><svg class="abs" style="left:14px;top:83px" width="12" height="11" viewBox="0 0 12 11"><path d="M0 2.600h4.600l1.200-1.600H12V11H0z" fill="#dcb67a"/><path d="M6.300 1.700h5.200v.9H5.700z" fill="#f6ead2"/></svg><div class="row" style="top:80px"><span style="left:30.5px;letter-spacing:-0.1px">shell.cdn.office.net</span></div>
<svg class="abs" style="left:4px;top:100px" width="5" height="8" viewBox="0 0 5 8"><path d="M.7 1v6L4 4z" fill="none" stroke="#2a2a2a" stroke-width="1.150"/></svg><svg class="abs" style="left:14px;top:99px" width="12" height="11" viewBox="0 0 12 11"><path d="M0 2.600h4.600l1.200-1.600H12V11H0z" fill="#dcb67a"/><path d="M6.300 1.700h5.200v.9H5.700z" fill="#f6ead2"/></svg><div class="row" style="top:96px"><span style="left:30.5px;letter-spacing:-0.09px">substrate.office.com</span></div>
<svg class="abs" style="left:4px;top:116px" width="5" height="8" viewBox="0 0 5 8"><path d="M.7 1v6L4 4z" fill="none" stroke="#2a2a2a" stroke-width="1.150"/></svg><svg class="abs" style="left:14px;top:115px" width="12" height="11" viewBox="0 0 12 11"><path d="M0 2.600h4.600l1.200-1.600H12V11H0z" fill="#dcb67a"/><path d="M6.300 1.700h5.200v.9H5.700z" fill="#f6ead2"/></svg><div class="row" style="top:112px"><span style="left:30.5px;letter-spacing:-0.15px">webpack:</span></div>
<svg class="abs" style="left:3px;top:133px" width="7" height="7" viewBox="0 0 7 7"><path d="M6.5.5v6h-6z" fill="#222"/></svg><svg class="abs" style="left:14px;top:131px" width="12" height="11" viewBox="0 0 12 11"><path d="M0 2.600h4.600l1.200-1.600H12V11H0z" fill="#dcb67a"/><path d="M6.300 1.700h5.200v.9H5.700z" fill="#f6ead2"/></svg><div class="row" style="top:128px"><span style="left:30.5px;letter-spacing:0px">www.office.com</span></div>
<div class="abs" style="left:15px;top:144px;width:283px;height:16px;background:#e9ebf5"></div>
<svg class="abs" style="left:23px;top:146px" width="14" height="14" viewBox="0 0 14 14"><path d="M3.600 7.500V.700h6.400l2.800 2.800v9.200h-1.800" fill="#fff" stroke="#333" stroke-width="1.200"/><path d="M9.800 .400v3.300h3.300z" fill="#333"/><circle cx="6" cy="11" r="2.100" fill="#1c9be0"/><path d="M2.700 9.200L1.100 11l1.600 1.800M9.300 9.200l1.600 1.800-1.600 1.800" fill="none" stroke="#444" stroke-width="1.100"/></svg>
<div class="row" style="top:144px"><span style="left:40.500px">apps</span></div>
<svg class="abs" style="left:25px;top:163px" width="12" height="13" viewBox="0 0 12 13"><path d="M.7.7h6.600l3.200 3.200v7.600H.7z" fill="#fff" stroke="#2a2a2a" stroke-width="1.300"/><path d="M7 .2v3.900h3.900z" fill="#444"/><path d="M2 3.300h3M3.500 1.800v3" stroke="#222" stroke-width="1"/><path d="M2.300 10.300l1.500-3.600 1.500 3.600M2.800 9h2" stroke="#e0202c" stroke-width="1" fill="none"/><rect x="7" y="6" width="2" height="1.800" fill="#444"/><rect x="7" y="8.600" width="2" height="1.800" fill="#444"/></svg>
<svg class="abs" style="left:40.500px;top:163px" width="13" height="13" viewBox="0 0 13 12"><path d="M6.5.6L12.6 11.5H.4z" fill="#f7b900" stroke="#f0ac00" stroke-width=".6"/><path d="M6.5 4v4" stroke="#fff8e0" stroke-width="1.4"/><circle cx="6.5" cy="9.7" r=".8" fill="#fff8e0"/></svg>
<div class="row" style="top:160px"><span style="left:58px">pwa</span></div></div>
  <div id="editor">
    <div id="gutter"></div>
    <svg class="abs" style="left:2px;top:420px" width="15" height="8" viewBox="0 0 15 8"><rect x="0" y=".2" width="1" height="7" fill="#3c3c3c"/><path d="M2 .2h8.600l3.600 3.500-3.600 3.500H2z" fill="#3c3c3c"/></svg>
    <div class="abs" style="left:61px;top:415px;width:2px;height:18px;background:#000"></div>
    <div class="ln" style="top:2px">57</div><div class="cl" style="top:2px">    FailedInitial = <span class="s">'FailedInitial'</span>,</div>
<div class="ln" style="top:20px">58</div><div class="cl" style="top:20px">    NoSubscription = <span class="s">'NoSubscription'</span>,</div>
<div class="ln" style="top:38px">59</div><div class="cl" style="top:38px">    NotInstalled = <span class="s">'NotInstalled'</span>,</div>
<div class="ln" style="top:56px">60</div><div class="cl" style="top:56px">    NotModern = <span class="s">'NotModern'</span>,</div>
<div class="ln" style="top:74px">61</div><div class="cl" style="top:74px">    SubscriptionFetchFailed = <span class="s">'SubscriptionFetchFailed'</span>,</div>
<div class="ln" style="top:92px">62</div><div class="cl" style="top:92px">    Success = <span class="s">'Success'</span></div>
<div class="ln" style="top:110px">63</div><div class="cl" style="top:110px">}</div>
<div class="ln" style="top:128px">64</div><div class="cl" style="top:128px"></div>
<div class="ln" style="top:146px">65</div><div class="cl" style="top:146px"><span class="c">// Service that PWA use to retrieve local MRU documents via native bridge.</span></div>
<div class="ln" style="top:164px">66</div><div class="cl" style="top:164px">@Injectable({</div>
<div class="ln" style="top:182px">67</div><div class="cl" style="top:182px">    providedIn: <span class="s">'root'</span></div>
<div class="ln" style="top:200px">68</div><div class="cl" style="top:200px">})</div>
<div class="ln" style="top:218px">69</div><div class="cl" style="top:218px"><span class="k">export</span> <span class="k">class</span> PwaNativeBridgeService {</div>
<div class="ln" style="top:236px">70</div><div class="cl" style="top:236px"></div>
<div class="ln" style="top:254px">71</div><div class="cl" style="top:254px">    <span class="k">private</span> installedlocalAppsPromise: Promise&lt;InstalledApps&gt; = <span class="k">null</span>;</div>
<div class="ln" style="top:272px">72</div><div class="cl" style="top:272px">    <span class="k">private</span> installedLocalAppsExPromise: Promise&lt;InstalledApps&gt; = <span class="k">null</span>;</div>
<div class="ln" style="top:290px">73</div><div class="cl" style="top:290px">    <span class="k">private</span> installedOfficeDetailsPromise: Promise&lt;InstalledOfficeDetailsResponse&gt; = <span class="k">null</span>;</div>
<div class="ln" style="top:308px">74</div><div class="cl" style="top:308px">    <span class="k">private</span> officeLicensePromise: Promise&lt;OfficeLicensesResponse&gt; = <span class="k">null</span>;</div>
<div class="ln" style="top:326px">75</div><div class="cl" style="top:326px">    <span class="k">private</span> consumerSubscriptionStatusPromise: Promise&lt;ConsumerSkuType&gt; = <span class="k">null</span>;</div>
<div class="ln" style="top:344px">76</div><div class="cl" style="top:344px">    <span class="k">private</span> localDocsRequestIndex = <span class="s">0</span>;</div>
<div class="ln" style="top:362px">77</div><div class="cl" style="top:362px">    <span class="k">private</span> readonly isMsa: <span class="k">boolean</span>;</div>
<div class="ln" style="top:380px">78</div><div class="cl" style="top:380px">    <span class="k">private</span> readonly recentFilesObservables = <span class="k">new</span> Map&lt;<span class="k">string</span>, ObservableWithSuccess&lt;MruData&gt;&gt;();</div>
<div class="ln" style="top:398px">79</div><div class="cl" style="top:398px"></div>
<div class="ln" style="top:416px">80</div><div class="cl" style="top:416px">    <span class="k">public</span> <span class="k">static</span> <span class="k">readonly</span> launchProtocol = <span class="s">'ms-officecmd:'</span>;</div>
<div class="ln" style="top:434px">81</div><div class="cl" style="top:434px"></div>
<div class="ln" style="top:452px">82</div><div class="cl" style="top:452px">    <span class="k">constructor</span>(</div>
<div class="ln" style="top:470px">83</div><div class="cl" style="top:470px">        <span class="k">private</span> readonly appServiceConnection: AppServiceConnection,</div>
<div class="ln" style="top:488px">84</div><div class="cl" style="top:488px">        <span class="k">private</span> readonly capabilitiesService: CapabilitiesService,</div>
<div class="ln" style="top:506px">85</div><div class="cl" style="top:506px">        <span class="k">private</span> readonly clientStartupConfigService: ClientStartupConfigService,</div>
<div class="ln" style="top:524px">86</div><div class="cl" style="top:524px">        <span class="k">private</span> readonly consumerInstallConfigService: ConsumerInstallConfigService,</div>
<div class="ln" style="top:542px">87</div><div class="cl" style="top:542px">        <span class="k">private</span> readonly instrumentationService: InstrumentationService,</div>
<div class="ln" style="top:560px">88</div><div class="cl" style="top:560px">        <span class="k">private</span> readonly locService: LocService,</div>
<div class="ln" style="top:578px">89</div><div class="cl" style="top:578px">        <span class="k">private</span> readonly urlLauncherService: UrlLauncherService,</div>
<div class="ln" style="top:596px">90</div><div class="cl" style="top:596px">        <span class="k">private</span> readonly pwaConfigService: PwaConfigService,</div>
<div class="ln" style="top:614px">91</div><div class="cl" style="top:614px">        @Inject(WRAPPER_VERSION) <span class="k">private</span> readonly wrapperVersion: WrapperVersion,</div>
<div class="ln" style="top:632px">92</div><div class="cl" style="top:632px">        <span class="k">private</span> readonly updateContentService: UpdateContentService</div>
<div class="ln" style="top:650px">93</div><div class="cl" style="top:650px">    ) {</div>
<div class="ln" style="top:668px">94</div><div class="cl" style="top:668px">        <span class="k">if</span> (<span class="k">this</span>.capabilitiesService.capabilities.pwaEnabled) {</div>
<div class="ln" style="top:686px">95</div><div class="cl" style="top:686px">            <span class="k">this</span>.isMsa = <span class="k">this</span>.clientStartupConfigService.config.authType === AuthType.MSA;</div>
<div class="ln" style="top:704px">96</div><div class="cl" style="top:704px">            <span class="k">this</span>.getInstalledAppsEx(<span class="k">true</span>);</div>
<div class="ln" style="top:722px">97</div><div class="cl" style="top:722px">            <span class="k">this</span>.getConsumerSubscriptionStatus();</div>
<div class="ln" style="top:740px">98</div><div class="cl" style="top:740px">        }</div>
<div class="ln" style="top:758px">99</div><div class="cl" style="top:758px">    }</div>
<div class="ln" style="top:776px">100</div><div class="cl" style="top:776px"></div>
<div class="ln" style="top:794px">101</div><div class="cl" style="top:794px">    <span class="k">public</span> getLocalMru(types?: Set&lt;FileType&gt;): Observable&lt;MruData&gt; {</div>
<div class="ln" style="top:812px">102</div><div class="cl" style="top:812px">        <span class="k">const</span> appsString = types ? Array.from(types).map(t =&gt; FileType[t]).join(<span class="s">','</span>) : <span class="s">''</span>;</div>
<div class="ln" style="top:830px">103</div><div class="cl" style="top:830px">        <span class="k">const</span> updateKey = <span class="s">`localMru-$</span>{appsString}<span class="s">`</span>;</div>
    <div id="vs"><svg class="abs" style="left:3px;top:12px" width="12" height="8" viewBox="0 0 12 8"><path d="M1 6.800l5-5 5 5" fill="none" stroke="#333" stroke-width="1.700"/></svg>
<div class="abs" style="left:0;top:30px;width:1px;height:787px;background:#dcdcdc"></div>
<div class="abs" style="left:0;top:80px;width:17px;height:42px;background:#c1c1c1"></div>
<div class="abs" style="left:1px;top:98px;width:16px;height:3px;background:#444"></div>
<div class="abs" style="left:1px;top:101px;width:16px;height:3px;background:#2f2f6b"></div>
<svg class="abs" style="left:3px;top:829px" width="12" height="8" viewBox="0 0 12 8"><path d="M1 1.200l5 5 5-5" fill="none" stroke="#333" stroke-width="1.700"/></svg></div>
  </div>
  <div class="abs" style="left:299px;top:107px;width:3px;height:1050px;background:#c0c0cc"></div>
  <div class="abs split" style="left:302px;top:954px;width:836px;height:3px"></div>
  <div id="search"><div class="abs" style="left:3px;top:4px;width:627px;height:24px;background:#fff"></div>
<span class="abs" style="left:7.399999999999977px;top:10px;font-size:12px;letter-spacing:.06px;color:#222;white-space:nowrap">ms-officecmd</span>
<span class="abs" style="left:552.5px;top:8px;font-size:12px;color:#555;white-space:nowrap;letter-spacing:-.4px">Aa</span>
<span class="abs" style="left:581px;top:8.200000000000045px;font-size:10.500px;color:#555;white-space:nowrap;letter-spacing:-.3px;border-top:1.300px solid #444;border-bottom:1.200px solid #444;line-height:10px;height:12px;width:14.500px">Ab</span>
<div class="abs" style="left:593.7px;top:9px;width:1.200px;height:9px;background:#555"></div>
<svg class="abs" style="left:610px;top:9px" width="12" height="12" viewBox="0 0 12 12"><rect x="1.200" y="7" width="2.600" height="2.600" fill="#333"/><path d="M6.800 1v7M3.800 2.700l6 3.500M9.800 2.700l-6 3.500" stroke="#333" stroke-width="1.400"/></svg>
<svg class="abs" style="left:635px;top:7px" width="14" height="15" viewBox="0 0 14 15"><path d="M9.500 4.200A5 5 0 1 1 4 4.500" fill="none" stroke="#444" stroke-width="1.600" transform="rotate(14 7 8.500)"/><path d="M6.600 0.300l4.200 3.200-4.600 2.400z" fill="#444"/></svg>
<svg class="abs" style="left:661px;top:6px" width="16" height="16" viewBox="0 0 16 16" fill="none"><path d="M6.500 4.200V2.200h8v8.300h-2" stroke="#8f8f8f" stroke-width="1.300"/><path d="M4 6.700V4.500h8v8.300h-2" stroke="#8f8f8f" stroke-width="1.300"/><rect x="1.600" y="7" width="8" height="7.600" fill="#f3f3f3" stroke="#555" stroke-width="1.600"/><rect x="3.800" y="9.800" width="3.400" height="1.600" fill="#1e6fd0"/></svg>
<svg class="abs" style="left:689px;top:6px" width="15" height="16" viewBox="0 0 15 16"><path d="M8.500 2.700h5.700M8.500 5.600h5.700M2 8.700h12.200M2 11.600h12.200M2 14.500h12.200" stroke="#4a4a4a" stroke-width="1.300"/><path d="M1.300 1.300l6.700 7M8 1.300l-6.700 7" stroke="#c0392b" stroke-width="1.500"/></svg>
<span class="abs" style="left:710.5px;top:10px;font-size:12px;letter-spacing:-.13px;color:#333;white-space:nowrap">1 results in 1 files</span>
<svg class="abs" style="left:812px;top:10px" width="10" height="10" viewBox="0 0 10 10"><path d="M1.500 1.500l7 7M8.500 1.500l-7 7" stroke="#3a3a3a" stroke-width="2.200"/></svg>
<div class="abs" style="left:0;top:32px;width:836px;height:1px;background:#dedede"></div></div>
  <div class="abs" style="left:302px;top:990px;width:1px;height:151px;background:#fff"></div><div class="abs" style="left:302px;top:1141px;width:1px;height:16px;background:#e6e6e6"></div>
  <div id="results"><svg class="abs" style="left:15px;top:16px" width="7" height="7" viewBox="0 0 7 7"><path d="M6.500.5v6h-6z" fill="#222"/></svg>
<span class="abs" style="left:25px;top:14px;font-size:13px;letter-spacing:-.07px;color:#222;white-space:nowrap">pwa-native-bridge.service.ts</span>
<span class="abs" style="left:194px;top:16px;font-size:12px;letter-spacing:.03px;color:#767676;white-space:nowrap">webpack:///./pwa/services/pwa-native-bridge.service.ts</span>
<div class="abs" style="left:353px;top:33px;width:86px;height:15px;background:#ffe4b0"></div>
<span class="abs" style="left:24px;top:34.5px;font-family:'Liberation Mono',monospace;font-size:12.500px;line-height:15px;color:#767676;white-space:pre;transform:scaleX(.9533);transform-origin:0 0"><span style="color:#222">(80)</span> public static readonly launchProtocol = 'ms-officecmd:';</span>
<svg class="abs" style="left:789px;top:13px" width="18" height="18" viewBox="0 0 18 18"><circle cx="9" cy="9" r="9" fill="#b3b3b3"/><path d="M6.900 7.300l2.500-1.900h.6v8.200" fill="none" stroke="#fff" stroke-width="1.300"/></svg>
<div class="abs" style="left:819px;top:0;width:16px;height:151px;background:#e6e6e6"></div>
<div class="abs" style="left:0;top:151px;width:836px;height:16px;background:#e6e6e6"></div>
<svg class="abs" style="left:822px;top:4px" width="10" height="6" viewBox="0 0 10 6"><path d="M.8 5.200l4.200-4.200 4.200 4.200" fill="none" stroke="#666" stroke-width="1"/></svg>
<svg class="abs" style="left:822px;top:140px" width="10" height="6" viewBox="0 0 10 6"><path d="M.8.800l4.200 4.200 4.200-4.200" fill="none" stroke="#666" stroke-width="1"/></svg>
<svg class="abs" style="left:5px;top:154px" width="6" height="10" viewBox="0 0 6 10"><path d="M5.200.8l-4.200 4.200 4.200 4.200" fill="none" stroke="#666" stroke-width="1"/></svg>
<svg class="abs" style="left:808px;top:154px" width="6" height="10" viewBox="0 0 6 10"><path d="M.8.800l4.200 4.200-4.200 4.200" fill="none" stroke="#666" stroke-width="1"/></svg></div>
  <div class="abs split" style="left:1138px;top:83px;width:3px;height:1074px"></div>
  <div id="right"><div class="abs" style="left:0;top:0;width:330px;height:24.600px;background:#ededed"></div>
<span class="abs" style="left:10.5px;top:5px;font-size:12px;color:#0078d7;white-space:nowrap">Watches</span>
<svg class="abs" style="left:266px;top:29px" width="18" height="16" viewBox="0 0 18 16"><path d="M2 3.800h5.500M4.750 1v5.500" stroke="#16a33a" stroke-width="1.500"/><g fill="#fff" stroke="#444" stroke-width="1.300"><path d="M4 11L8.300 5.700M15.500 11l-4.700-5.300" fill="none"/><path d="M3.800 11.300h11.900" stroke-width="1.600"/><circle cx="6.300" cy="12.600" r="2.100"/><circle cx="12.800" cy="12.600" r="2.100"/></g></svg>
<svg class="abs" style="left:293px;top:29px" width="18" height="16" viewBox="0 0 18 16"><path d="M1 1l7.300 7.300M8.300 1L1 8.300" stroke="#9a9a9a" stroke-width="1"/><path d="M8.500 5.800h6M4.500 10h10M4.500 14h10" stroke="#a6a6a6" stroke-width="1.800"/></svg>
<div class="abs" style="left:1px;top:52px;width:315px;height:19.600px;background:#d9d9d9"></div>
<span class="abs" style="left:18px;top:54px;font-size:12px;color:#106ebe;white-space:nowrap">Add watch</span>
<div class="abs split" style="left:0;top:536px;width:330px;height:3px"></div>
<div class="abs" style="left:0;top:539px;width:330px;height:24.800px;background:#efefef"></div>
<span class="abs" style="left:10px;top:543px;font-size:12px;color:#0078d7;white-space:nowrap;letter-spacing:-.1px;text-shadow:.3px 0 0 #0078d7">Call stack</span>
<span class="abs" style="left:71px;top:543px;font-size:12px;color:#444;white-space:nowrap;letter-spacing:-.12px">Breakpoints</span>
<span class="abs" style="left:143px;top:543px;font-size:12px;color:#444;white-space:nowrap;letter-spacing:.04px">DOM breakpoints</span>
<div class="abs" style="left:268px;top:567px;width:18px;height:21px;background:#b9b9b9"></div>
<svg class="abs" style="left:269px;top:568px" width="16" height="16" viewBox="0 0 16 16"><g fill="none" stroke="#4f4f4f" stroke-width="1.200"><path d="M4.500 .8c-1.700 0-2 .7-2 1.900v2.600c0 1.200-.4 1.900-1.400 2.300 1 .4 1.400 1.100 1.400 2.300v2.600c0 1.200.3 1.900 2 1.900"/><path d="M11.500 .8c1.700 0 2 .7 2 1.900v2.600c0 1.200.4 1.900 1.400 2.300-1 .4-1.400 1.100-1.400 2.300v2.600c0 1.200-.3 1.900-2 1.900"/></g><circle cx="8" cy="4.300" r="2.200" fill="#555"/><path d="M4.600 7.500h2.200l1.200 1.500 1.200-1.500h2.200v4.700h-6.800z" fill="#555"/></svg>
<div class="abs" style="left:292px;top:567px;width:18px;height:21px;background:#f0f0f0"></div>
<svg class="abs" style="left:293px;top:568px" width="17" height="16" viewBox="0 0 17 16"><circle cx="4.400" cy="4" r="3.400" fill="#1672c4"/><rect x="2.200" y="3.300" width="4.400" height="1.300" fill="#fff"/><rect x="9" y="1" width="6" height="4" fill="#1672c4"/><path d="M12.400 5v6.200M10.300 7.600l2.100-2.200 2.100 2.200" stroke="#1672c4" stroke-width="1.300" fill="none"/><path d="M1 12.500h14.200M1 14.700h14.200" stroke="#1672c4" stroke-width="1.100"/></svg></div>
  <div class="abs" style="left:1470px;top:54px;width:1px;height:1103px;background:#fff"></div>
</div>
<div class="abs" style="left:126px;top:108px;width:1px;height:1050px;background:#3392f5"></div>
<div id="taskbar"><div class="abs" style="left:0;top:0;width:48px;height:40px;background:#cbe3f0"></div>
<svg class="abs" style="left:16px;top:12px" width="17" height="17" viewBox="0 0 17 17"><path d="M0 2.400L6.900 1.400v6.700H0zM7.700 1.300L16.500 0v8.100H7.700zM0 8.900h6.900v6.700L0 14.600zM7.700 8.900h8.800V17l-8.800-1.300z" fill="#000"/></svg>
<div class="abs" style="left:48px;top:1px;width:344px;height:39px;background:#fff;border-left:1px solid #9fa6ad;border-right:1px solid #c9ced4"></div>
<svg class="abs" style="left:59px;top:11px" width="18" height="18" viewBox="0 0 18 18"><circle cx="11.500" cy="6.800" r="5" fill="none" stroke="#111" stroke-width="1.200"/><path d="M8 10.500L1 17.500" stroke="#111" stroke-width="1.300"/></svg>
<span class="abs" style="left:88px;top:13px;font-size:14.500px;color:#2b2b2b;white-space:nowrap;letter-spacing:-.03px">Type here to search</span>
<svg class="abs" style="left:407px;top:11px" width="18" height="17" viewBox="0 0 18 17" fill="none" stroke="#111" stroke-width="1.100"><rect x="1.500" y="5.600" width="10" height="5.600"/><path d="M1.500 1.200v1.700h10V1.200M1.500 15.500v-1.700h10v1.700"/><path d="M15.500 1.200v3.300M15.500 9.200v6.500"/><rect x="14.200" y="5.300" width="2.700" height="2.600" fill="#111" stroke="none"/></svg>
<svg class="abs" style="left:454px;top:7px" width="26" height="26" viewBox="0 0 26 26"><defs><linearGradient id="eg1" x1="0" y1="0" x2="0" y2="1"><stop offset="0" stop-color="#1b8fe0"/><stop offset="1" stop-color="#1170c8"/></linearGradient><linearGradient id="eg2" x1="0" y1="0" x2="1" y2=".5"><stop offset="0" stop-color="#2aa9ec"/><stop offset=".5" stop-color="#30c3c0"/><stop offset="1" stop-color="#6fdc4c"/></linearGradient></defs><circle cx="13" cy="13.200" r="12.200" fill="url(#eg1)"/><path d="M1.200 10.500C2.500 4.800 7.300 1 13 1c7 0 12.200 5 12.200 10.800 0 3.300-2.300 5.400-5.300 5.400-2.300 0-3.600-.8-3.600-1.800 0-.6.900-1 .9-2.700 0-2.800-3-5.700-7-5.700-4.300 0-8 2.300-9 3.500z" fill="url(#eg2)"/><path d="M8.500 11.500c-1.200 5 2.800 10.500 9 10.700 2.400.1 4.800-.8 6.600-2.400-1.900 3.400-5.700 5.800-10.200 5.600C8.300 25.200 4.600 21 4.800 16.500c.1-2.800 1.800-5 4.400-6-.4.300-.6.600-.7 1z" fill="#0f4f9e"/><path d="M10.800 11c.7-.9 1.700-1.300 2.700-1.300 2 0 3.400 1.400 3.400 3 0 1.300-.7 1.800-.7 2.600 0 .5.400 1 1.100 1.300-2.800.2-5.400-.8-6.300-2.600-.5-1-.6-2.100-.2-3z" fill="#eef6fb"/></svg>
<svg class="abs" style="left:504px;top:10px" width="24" height="20" viewBox="0 0 24 20"><path d="M1 1.200h8.500l1 1.800H1z" fill="#e8a400"/><rect x="1" y="2.200" width="21.700" height="16.300" rx=".8" fill="#ffd45c"/><rect x="1" y="2.900" width="21.700" height="2.500" fill="#ffe08a"/><path d="M1 1.200h8.500l1 1.800H1z" fill="#e8a400"/><path d="M5.200 12.200a1.200 1.200 0 0 1 1.200-1.200h11.200a1.200 1.200 0 0 1 1.200 1.200v6.300h-4v-4.300H9.200v4.300h-4z" fill="#2f8fe6"/></svg>
<svg class="abs" style="left:555px;top:7px" width="20" height="25" viewBox="0 0 20 25"><defs><linearGradient id="og1" x1="0" y1="0" x2="0" y2="1"><stop offset="0" stop-color="#f59e22"/><stop offset=".45" stop-color="#e4500a"/><stop offset="1" stop-color="#cf380a"/></linearGradient><linearGradient id="og2" x1="1" y1="0" x2="0" y2="1"><stop offset="0" stop-color="#8f1216"/><stop offset=".6" stop-color="#b81c2a"/><stop offset="1" stop-color="#c93a6a"/></linearGradient></defs><path d="M10.500 1L17.500 3.200a2 2 0 0 1 1.500 2v14.600a2 2 0 0 1-1.500 2L10.500 24.200z" fill="url(#og1)"/><path d="M10.500 1L2.500 5.500A2.500 2.500 0 0 0 1 7.800v9.500l4.500-2.300V8.800L10.500 6.500z" fill="url(#og2)"/><path d="M1 17.300l4.500-2.300v2l5 2.200v5l-8-4.200A2.500 2.500 0 0 1 1 17.300z" fill="#e3212d"/></svg>
<div class="abs" style="left:545px;top:38px;width:40px;height:2px;background:#0078d7"></div>
<div class="abs" style="left:590px;top:0;width:45px;height:40px;background:rgba(255,255,255,.5)"></div>
<div class="abs" style="left:635px;top:0;width:2px;height:40px;background:rgba(255,255,255,.25)"></div>
<div class="abs" style="left:590px;top:38px;width:45px;height:2px;background:#0078d7"></div><div class="abs" style="left:635px;top:38px;width:2.500px;height:2px;background:#5aa5e6"></div>
<svg class="abs" style="left:602px;top:8px" width="24" height="24" viewBox="0 0 24 24"><rect width="24" height="24" fill="#0078d7"/><rect x="4.700" y="4.700" width="11.300" height="10" fill="none" stroke="#fff" stroke-width="1.600"/><path d="M8.700 7.600l-1.500 2 1.500 2M11.800 7.600l1.500 2-1.500 2" fill="none" stroke="#fff" stroke-width="1"/><path d="M17.200 13.300L10.800 19.200" stroke="#0078d7" stroke-width="5"/><path d="M17.500 13L10.800 19.200" stroke="#fff" stroke-width="2.600" stroke-linecap="round"/><circle cx="18.300" cy="11.700" r="3" fill="#fff"/><path d="M18.600 11.400l2.400-3.600 2 2z" fill="#0078d7"/></svg>
<svg class="abs" style="left:1332px;top:15px" width="14" height="9" viewBox="0 0 14 9"><path d="M1 8l6-6.500L13 8" fill="none" stroke="#111" stroke-width="1.300"/></svg>
<svg class="abs" style="left:1357px;top:11px" width="14" height="18" viewBox="0 0 14 18" fill="none" stroke="#111" stroke-width="1.100"><rect x="1" y="5" width="8" height="8" rx="2"/><path d="M9 8l3.500-2v6L9 10"/><path d="M2.500 3c2-2 5.500-2 7.500 0M2.500 15.500c2 2 5.500 2 7.500 0"/></svg>
<svg class="abs" style="left:1378px;top:13px" width="19" height="13" viewBox="0 0 19 13"><rect x="5.500" y="3" width="11.500" height="7" fill="none" stroke="#111" stroke-width="1.100"/><rect x="7" y="4.500" width="8.500" height="4" fill="#111"/><rect x="17" y="5" width="1.500" height="3" fill="#111"/><path d="M2 1v3M5 1v3M1 4h5v2.500a2.500 2.500 0 0 1-5 0zM3.500 9v3.500" stroke="#111" stroke-width="1.100" fill="#111"/></svg>
<svg class="abs" style="left:1402px;top:13px" width="18" height="15" viewBox="0 0 18 15" fill="none" stroke="#111" stroke-width="1.100"><rect x="4.500" y="1.500" width="12.500" height="8.500"/><path d="M10.700 10v3M7 13.500h7.500"/><rect x="1" y="2.500" width="4" height="3" fill="#d3deec"/><path d="M3 5.500v8"/></svg>
<svg class="abs" style="left:1426px;top:12px" width="18" height="16" viewBox="0 0 18 16" fill="none" stroke="#111" stroke-width="1.100"><path d="M1.500 5.500h2.500l3.500-3.500v12l-3.500-3.500H1.500z"/><path d="M10 5.500a3.500 3.500 0 0 1 0 5M12 3.500a6.300 6.300 0 0 1 0 9M14 1.500a9 9 0 0 1 0 13"/></svg>
<span class="abs" style="left:1453.500px;top:13px;font-size:11px;color:#111;white-space:nowrap;letter-spacing:-.7px">ENG</span>
<span class="abs" style="left:1492.500px;top:3px;font-size:12px;color:#111;white-space:nowrap;letter-spacing:-.35px">4:38 AM</span>
<span class="abs" style="left:1488.500px;top:22px;font-size:12px;color:#111;white-space:nowrap;letter-spacing:-.27px">4/20/2021</span>
<svg class="abs" style="left:1559px;top:11px" width="17" height="18" viewBox="0 0 17 18"><path d="M1 1.500h15v11.500h-5l-2.700 2.800L5.600 13H1z" fill="none" stroke="#111" stroke-width="1.100"/></svg>
<div class="abs" style="left:1595px;top:0;width:1px;height:40px;background:#9aa6b8"></div></div>
<svg class="abs" style="left:1448px;top:1150px" width="140" height="50" viewBox="0 0 140 50"><g opacity=".35"><circle cx="23.600" cy="21.600" r="16.500" fill="none" stroke="#7d8796" stroke-width="1.800"/><text x="49.600" y="28.600" font-family="Liberation Sans" font-size="22" fill="#7d8796" letter-spacing=".2">seebug</text></g><g opacity=".8"><circle cx="23" cy="21" r="16.500" fill="none" stroke="#fff" stroke-width="1.700"/><path d="M14 17l2.500-1.500 1 1.500c4-3 9.500-2.500 13.500 1 4 3.500 6.500 9 6.500 14.500l-9.500 2.500-4 7.500-6-1.500 5.500-8.500L14.500 20z" fill="#fff" opacity=".92"/><path d="M17 13.500l1 2 2 .3-1.500 1.400.4 2-1.900-1-1.800 1 .3-2-1.500-1.400 2-.3z" fill="#fff"/><text x="49" y="28" font-family="Liberation Sans" font-size="22" fill="#fff" letter-spacing=".2">seebug</text></g></svg>
</body>
</html>
